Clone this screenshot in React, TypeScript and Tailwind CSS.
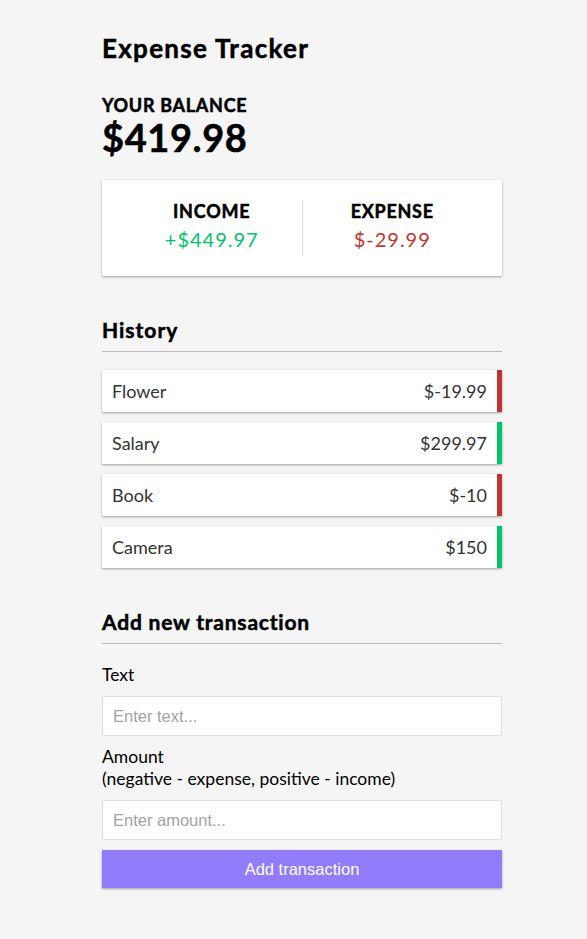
const transactions = [
  { id: 1, text: "Flower", amount: "$-19.99", plus: false },
  { id: 2, text: "Salary", amount: "$299.97", plus: true },
  { id: 3, text: "Book", amount: "$-10", plus: false },
  { id: 4, text: "Camera", amount: "$150", plus: true },
];

const shadow = "shadow-[0_1px_3px_rgba(0,0,0,0.12),0_1px_2px_rgba(0,0,0,0.24)]";
// heavier look for headings (Lato Black isn't installed)
const heavy = "font-bold [-webkit-text-stroke:0.5px_black]";

export default function App() {
  return (
    <div className="min-h-[939px] bg-[#f5f5f5] font-['Lato',sans-serif] text-black">
      <div className="ml-[102px] w-[400px] pt-[33px]">
        <h2 className={`text-[26px] leading-[30px] tracking-[1.3px] ${heavy}`}>Expense Tracker</h2>

        <h4 className={`mt-[32px] text-[18px] leading-[20px] tracking-[0.7px] uppercase ${heavy}`}>Your Balance</h4>
        <h1 className={`text-[38px] leading-[44px] tracking-[0.6px] ${heavy}`}>$419.98</h1>

        {/* income / expense */}
        <div className={`mt-[21px] flex bg-white p-[20px] ${shadow}`}>
          <div className="flex-1 border-r border-[#dedede] text-center">
            <h4 className={`text-[18px] leading-[22px] tracking-[0.8px] uppercase ${heavy}`}>Income</h4>
            <p className="my-[4px] text-[20px] leading-[26px] tracking-[1px] text-[#00c46a]">+$449.97</p>
          </div>
          <div className="flex-1 text-center">
            <h4 className={`text-[18px] leading-[22px] tracking-[0.7px] uppercase ${heavy}`}>Expense</h4>
            <p className="my-[4px] text-[20px] leading-[26px] tracking-[1px] text-[#c23330]">$-29.99</p>
          </div>
        </div>

        <h3 className={`mt-[41px] border-b border-[#bbb] pb-[9px] text-[21px] leading-[25px] tracking-[1px] ${heavy}`}>History</h3>
        <ul className="mt-[18px] flex flex-col gap-[10px]">
          {transactions.map((t) => (
            <li
              key={t.id}
              className={`flex h-[42px] items-center justify-between bg-white pl-[10px] pr-[10px] text-[18px] text-[#333] ${shadow} border-r-[5px] ${
                t.plus ? "border-[#00c46a]" : "border-[#c23330]"
              }`}
            >
              <span>{t.text}</span>
              <span>{t.amount}</span>
            </li>
          ))}
        </ul>

        <h3 className={`mt-[41px] border-b border-[#bbb] pb-[9px] text-[21px] leading-[25px] tracking-[0.8px] ${heavy}`}>Add new transaction</h3>
        <form className="mt-[10px]">
          <label className="block py-[10px] text-[17.5px] leading-[22px]">Text</label>
          <input
            type="text"
            placeholder="Enter text..."
            className="block h-[40px] w-full rounded-[2px] border border-[#dedede] bg-white px-[10px] font-['Liberation_Sans',sans-serif] text-[16.5px] placeholder:text-[#a3a3a3]"
          />
          <label className="block py-[10px] text-[17.5px] leading-[22px]">
            Amount <br />
            (negative - expense, positive - income)
          </label>
          <input
            type="number"
            placeholder="Enter amount..."
            className="block h-[40px] w-full rounded-[2px] border border-[#dedede] bg-white px-[10px] font-['Liberation_Sans',sans-serif] text-[16.5px] placeholder:text-[#a3a3a3]"
          />
          <button
            type="button"
            className={`mt-[10px] block h-[38px] w-full bg-[#927cfb] font-['Liberation_Sans',sans-serif] text-[16.5px] text-white ${shadow}`}
          >
            Add transaction
          </button>
        </form>
      </div>
    </div>
  );
}
